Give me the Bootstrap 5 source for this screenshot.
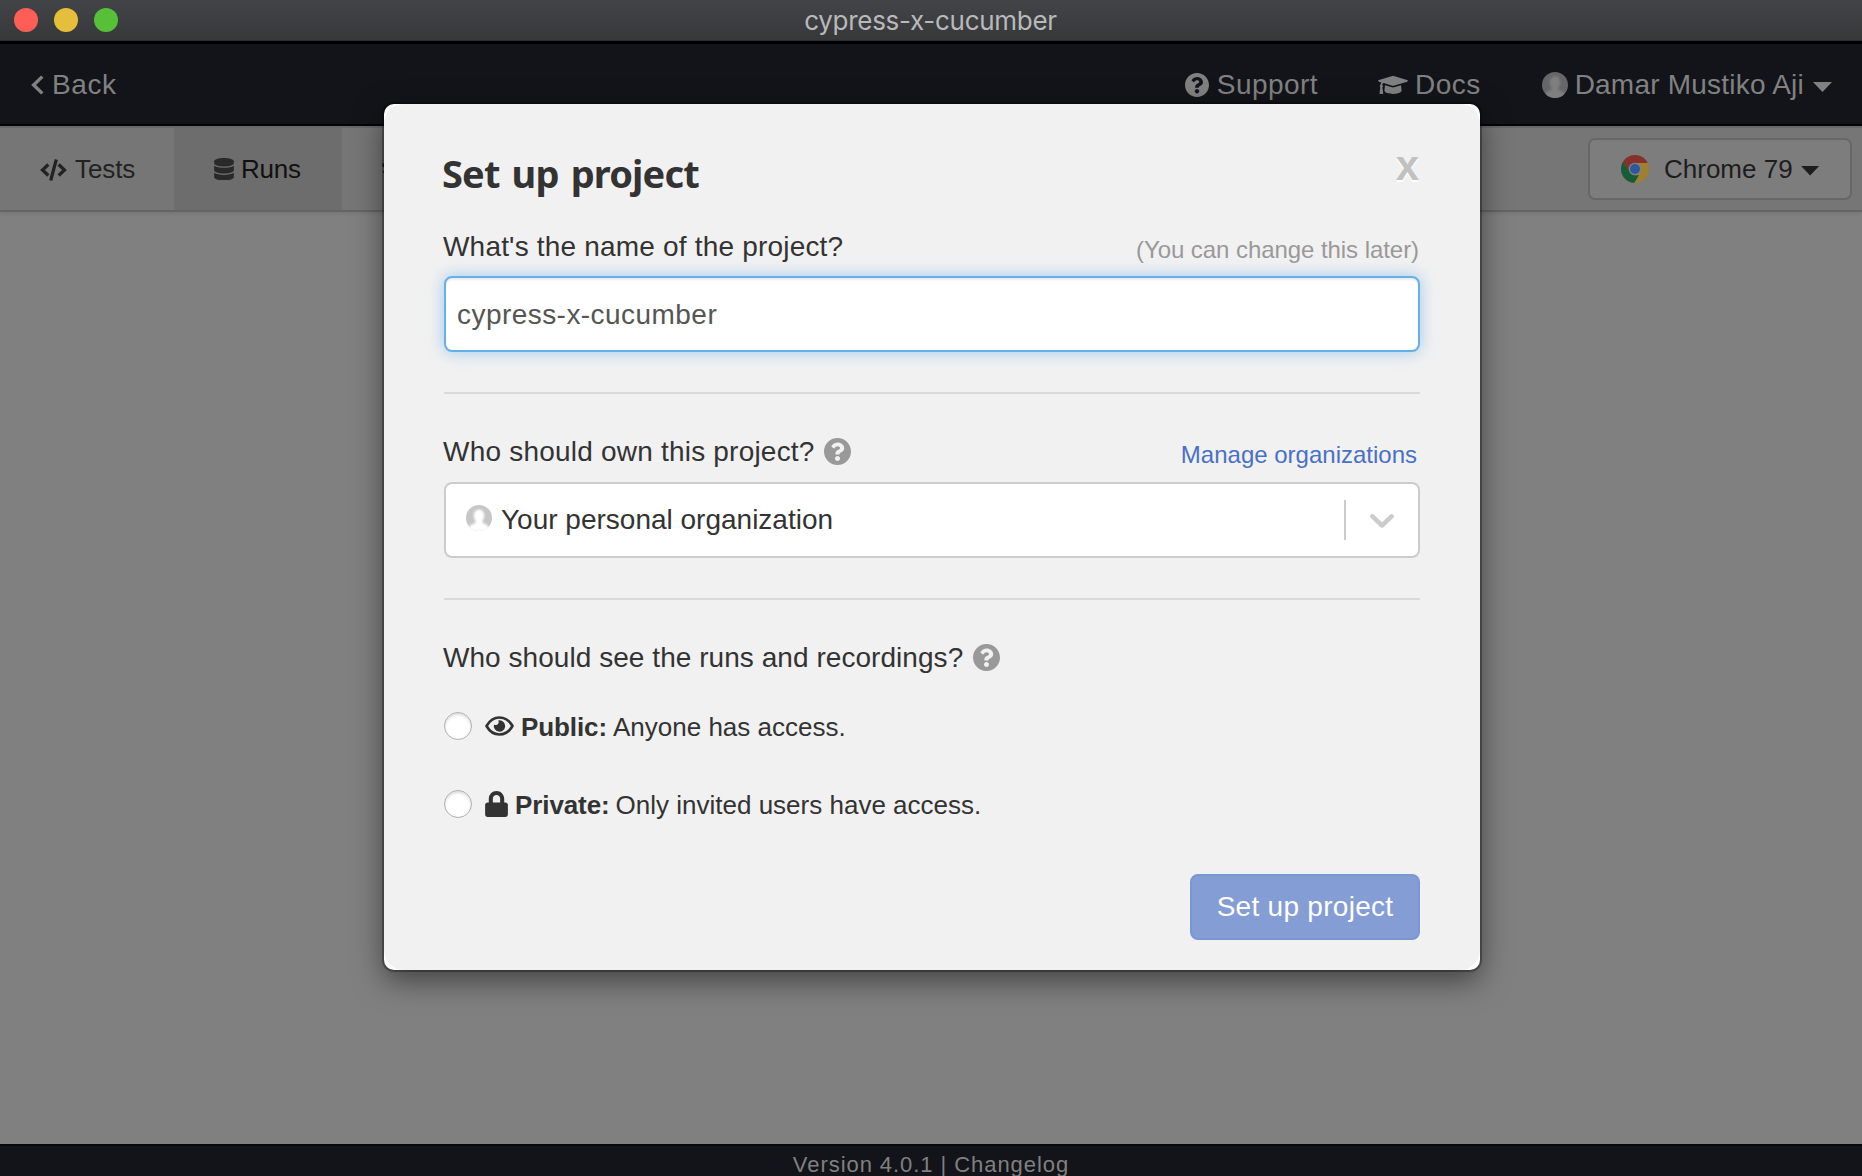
<!DOCTYPE html>
<html lang="en">
<head>
<meta charset="utf-8">
<meta name="viewport" content="width=device-width, initial-scale=1">
<title>cypress-x-cucumber</title>
<link rel="stylesheet" href="https://cdn.jsdelivr.net/npm/bootstrap@5.3.0/dist/css/bootstrap.min.css">
<style>
  html, body { height: 100%; }
  body { font-family: "Liberation Sans", Arial, sans-serif; font-size: 28px; line-height: 40px; background: #808080; color: #333; overflow: hidden; }
  svg { display: block; flex: none; }

  /* window title bar */
  .titlebar { height: 44px; padding: 0 14px 4px; background: linear-gradient(#434447, #37383a 40px, #2c2d2f 40px, #2c2d2f 41px, #000 41px); }
  .dot { width: 24px; height: 24px; border-radius: 50%; }
  .dot-r { background: #ff5e57; } .dot-y { background: #e5bf3c; } .dot-g { background: #57c038; }
  .win-title { font-family: Inter, sans-serif; font-size: 26px; letter-spacing: -.3px; color: #b8b9ba; padding-top: 2px; margin-right: 1px; }
  .title-side { width: 400px; gap: 16px; }

  /* app navigation */
  .topnav { height: 82px; padding: 0 30px 0 31px; background: #131419; border-bottom: 2px solid #050507; color: #818181; flex-wrap: nowrap; }
  .topnav .nav-link { display: flex; align-items: center; padding: 0; color: inherit; }
  .topnav .nav-link span { padding-top: 1px; }
  .nav-gap { margin-right: 60px; }
  .tabbar { height: 86px; background: #767676; border-top: 2px solid #686868; border-bottom: 2px solid #646464; box-shadow: 0 2px 4px rgba(0,0,0,.08); font-size: 26px; color: #222; }
  .tabbar .nav-link { display: flex; align-items: center; padding: 0; color: inherit; height: 82px; }
  .tab-tests { width: 174px; padding-left: 40px !important; }
  .tab-runs { width: 168px; padding-left: 40px !important; background: #6d6d6d; color: #111 !important; }
  .tab-settings { padding-left: 40px !important; }
  .browser-btn { width: 264px; height: 62px; margin-right: 10px; padding: 0 0 0 31px; border: 2px solid #676767; border-radius: 7px; background: #7d7d7d; color: #1d1d1d; font-size: 26px; }
  .caret-down { width: 19px; height: 10px; background: currentColor; clip-path: polygon(0 0, 100% 0, 50% 100%); margin-top: 3px; }

  .app-footer { height: 32px; background: #131419; border-top: 2px solid #08080a; color: #808080; font-size: 22px; line-height: 38px; letter-spacing: .94px; overflow: hidden; }
  .app-footer a { color: inherit; text-decoration: none; }

  /* dialog */
  .setup-modal { overflow: hidden; }
  .setup-modal .modal-dialog { width: 1096px; max-width: none; margin: 104px 0 0 384px; }
  .setup-modal .modal-content { border: 0; border-radius: 10px; background: #fff; box-shadow: 0 0 0 2px rgba(0,0,0,.3), 0 10px 30px rgba(0,0,0,.5); }
  .setup-modal .modal-body { height: 866px; padding: 49px 60px 30px; border-radius: 20px; background: #f1f1f1; }
  .setup-title { margin: 0 0 0 -2px; font-family: "Noto Sans", sans-serif; font-size: 38px; font-weight: 700; line-height: 40px; letter-spacing: -.85px; word-spacing: 3px; color: #333; }
  .close-x { padding: 0; border: 0; background: none; color: #c1c1c1; font-size: 42px; font-weight: 700; line-height: 40px; margin: -7px 1px 0 0; text-shadow: 0 2px 0 #fff; }
  .field-head { height: 40px; margin-bottom: 10px; }
  .field-text { margin-left: -1px; }
  .side-note { font-size: 24px; padding: 4px 1px 0 0; color: #999; text-decoration: none; }
  .side-link { color: #4970c6; padding: 3px 3px 0 0; }
  .name-input { height: 76px; padding: 1px 11px 0; border: 2px solid #66afe9; border-radius: 8px; font-size: 28px; letter-spacing: .45px; color: #555; box-shadow: inset 0 2px 2px rgba(0,0,0,.075), 0 0 16px rgba(102,175,233,.6) !important; }
  .owner-select { height: 76px; border: 2px solid #ccc; border-radius: 8px; background: #fff; padding-left: 20px; }
  .bar-sep { width: 2px; height: 40px; background: #ccc; }
  .rule { margin: 40px 0 38px; border: 0; height: 2px; background: #d9d9d9; opacity: 1; }
  .choice { height: 40px; font-size: 26px; }
  .choice input { appearance: none; width: 28px; height: 28px; margin: 0 13px 0 0; border: 1px solid #b0b0b0; border-radius: 50%; background: #fff; box-shadow: inset 0 2px 3px rgba(0,0,0,.14); flex: none; }
  .choice b { margin: 0 6px 0 7px; letter-spacing: -.1px; }
  .choice span, .choice b { padding-top: 1px; }
  .btn-setup { width: 230px; height: 66px; padding: 0; border: 2px solid #7a97d3; border-radius: 8px; background: #859dd5; color: #fff; font-size: 28px; letter-spacing: .28px; }
  .btn-setup:disabled { opacity: 1; color: #fff; background: #859dd5; border-color: #7a97d3; }
</style>
<script src="https://cdn.jsdelivr.net/npm/bootstrap@5.3.0/dist/js/bootstrap.bundle.min.js"></script>
</head>
<body class="d-flex flex-column">

<svg width="0" height="0" class="position-absolute">
  <defs>
    <symbol id="i-help" viewBox="8 8 496 496"><path d="M504 256c0 136.997-111.043 248-248 248S8 392.997 8 256C8 119.083 119.043 8 256 8s248 111.083 248 248zM262.655 90c-54.497 0-89.255 22.957-116.549 63.758-3.536 5.286-2.353 12.415 2.715 16.258l34.699 26.31c5.205 3.947 12.621 3.008 16.665-2.122 17.864-22.658 30.113-35.797 57.303-35.797 20.429 0 45.698 13.148 45.698 32.958 0 14.976-12.363 22.667-32.534 33.976C247.128 238.528 216 254.941 216 296v4c0 6.627 5.373 12 12 12h56c6.627 0 12-5.373 12-12v-1.333c0-28.462 83.186-29.647 83.186-106.667 0-58.002-60.165-102-116.531-102zM256 338c-25.365 0-46 20.635-46 46 0 25.364 20.635 46 46 46s46-20.636 46-46c0-25.365-20.635-46-46-46z"/></symbol>
    <filter id="soft"><feGaussianBlur stdDeviation=".8"/></filter>
  </defs>
</svg>

<header class="titlebar d-flex align-items-center justify-content-between">
  <div class="title-side d-flex"><span class="dot dot-r"></span><span class="dot dot-y"></span><span class="dot dot-g"></span></div>
  <div class="win-title">cypress-x-cucumber</div>
  <div class="title-side"></div>
</header>

<nav class="topnav navbar">
  <a class="nav-link" href="#">
    <svg width="13" height="20" viewBox="0 0 13 20" style="margin-top:2px"><path d="M11.3 1.600 2.600 10l8.700 8.400" fill="none" stroke="currentColor" stroke-width="3.400"/></svg>
    <span style="letter-spacing:.58px" class="ms-2">Back</span>
  </a>
  <div class="d-flex align-items-center">
    <a class="nav-link nav-gap" href="#">
      <svg width="24" height="24" fill="currentColor" style="margin-top:2px"><use href="#i-help"/></svg>
      <span class="ms-2" style="letter-spacing:.45px">Support</span>
    </a>
    <a class="nav-link" href="#" style="margin-right:61px">
      <svg width="30" height="18" viewBox="0 0 30 18" fill="currentColor" style="margin-top:2px"><path d="M15 0c.5 0 1 .1 1.500.2l12.600 3.700c1 .3 1 1.500 0 1.800l-12.600 3.700c-1 .3-2 .3-3 0L5.700 7.100c-.9.400-1.300 1-1.400 2 .9.600.9 1.700.1 2.300l.8 5.600c.1.500-.2.900-.7.900H2.200c-.5 0-.8-.4-.7-.9l.8-5.600c-.8-.6-.7-1.800.1-2.300.1-1.100.4-1.900 1-2.600L.9 5.700C-.1 5.400-.1 4.200.9 3.900L13.500.2C14 .1 14.500 0 15 0z"/><path d="M7 9.300l6 1.800c1.400.4 2.700.4 4 0l6-1.800.6 5.300c0 1.900-3.900 3.400-8.600 3.400s-8.600-1.500-8.600-3.400z"/></svg>
      <span style="letter-spacing:.45px;margin-left:7px">Docs</span>
    </a>
    <a class="nav-link" href="#">
      <svg width="26" height="26" viewBox="0 0 26 26" style="margin-top:2px"><clipPath id="ca"><circle cx="13" cy="13" r="13"/></clipPath><g clip-path="url(#ca)"><path fill="#666" d="M0 0h26v26H0z"/><g fill="#7f7f7f" filter="url(#soft)"><ellipse cx="13" cy="10.500" rx="5.300" ry="6.300"/><path d="M9.500 15h7v3c4 1 7 3 8 9h-23c1-6 4-8 8-9z"/></g></g></svg>
      <span style="letter-spacing:.22px;margin-left:7px;margin-right:9px">Damar Mustiko Aji</span><span class="caret-down" style="margin-top:6px"></span>
    </a>
  </div>
</nav>

<div class="tabbar d-flex align-items-center">
  <a class="nav-link tab-tests" href="#">
    <svg width="27" height="22" viewBox="0 0 27 22" fill="none" stroke="currentColor" stroke-width="3.200" style="margin-top:1px"><path d="M8.300 5.500 2.500 11l5.800 5.500M18.700 5.500l5.800 5.500-5.800 5.500"/><path d="M16.300.5 10.700 21.500"/></svg>
    <span style="letter-spacing:-.1px;margin-left:8px">Tests</span>
  </a>
  <a class="nav-link tab-runs" href="#">
    <svg width="20" height="22.500" viewBox="0 0 448 512" fill="#292929"><path d="M448 73.143v45.714C448 159.143 347.667 192 224 192S0 159.143 0 118.857V73.143C0 32.857 100.333 0 224 0s224 32.857 224 73.143zM448 176v102.857C448 319.143 347.667 352 224 352S0 319.143 0 278.857V176c48.125 33.143 136.208 48.572 224 48.572S399.874 209.143 448 176zm0 160v102.857C448 479.143 347.667 512 224 512S0 479.143 0 438.857V336c48.125 33.143 136.208 48.572 224 48.572S399.874 369.143 448 336z"/></svg>
    <span style="letter-spacing:-.2px;margin-left:7px">Runs</span>
  </a>
  <a class="nav-link tab-settings me-auto" href="#">
    <svg width="24" height="24" viewBox="0 0 24 24" fill="currentColor"><path fill-rule="evenodd" d="M10 0h4v4h-4zM10 20h4v4h-4zM.4 5.500 2.400 7 5 8v8l-2.600 1-1.800-2.500L2.500 13v-2L.4 9.300zM23.500 5.500v3.800L21.500 11v2l2 1.500-2 2.500L19 16V8zM12 3a9 9 0 1 1 0 18 9 9 0 0 1 0-18zm0 5a4 4 0 1 0 0 8 4 4 0 0 0 0-8z"/></svg>
  </a>
  <button type="button" class="browser-btn d-flex align-items-center">
    <svg width="28" height="28" viewBox="0 0 28 28"><clipPath id="cc"><circle cx="14" cy="14" r="14"/></clipPath><g clip-path="url(#cc)"><path fill="#85322c" d="M0 0h28v8H14L8.500 17 0 4z"/><path fill="#a07f2d" d="M14 8h14v20H12.500L19.400 17z"/><path fill="#175c37" d="M1.800 6.500 8.800 17l5.200 3.200h4L13.200 28H0V6.500z"/></g><circle cx="14" cy="14" r="6.300" fill="#7f8387"/><circle cx="14" cy="14" r="5" fill="#2f579c"/></svg>
    <span style="margin-left:15px;margin-right:8px">Chrome 79</span><span class="caret-down"></span>
  </button>
</div>

<main class="flex-grow-1"></main>

<footer class="app-footer text-center">Version 4.0.1 | <a href="#">Changelog</a></footer>

<div class="modal d-block setup-modal" tabindex="-1" role="dialog" aria-labelledby="setup-heading">
  <div class="modal-dialog">
    <div class="modal-content">
      <form class="modal-body d-flex flex-column">
        <div class="d-flex justify-content-between align-items-start" style="margin-bottom:33px">
          <h4 class="setup-title" id="setup-heading">Set up project</h4>
          <button type="button" class="close-x" aria-label="Close">x</button>
        </div>

        <div class="field-head d-flex justify-content-between">
          <label for="project-name" class="field-text" style="letter-spacing:.19px;padding-top:1px">What's the name of the project?</label>
          <span class="side-note" style="letter-spacing:-.06px">(You can change this later)</span>
        </div>
        <input type="text" id="project-name" class="form-control name-input" value="cypress-x-cucumber">

        <hr class="rule">

        <div class="field-head d-flex justify-content-between">
          <div class="d-flex">
            <span class="field-text" style="letter-spacing:.21px">Who should own this project?</span>
            <svg width="27" height="27" fill="#999" style="margin:6px 0 0 9px"><use href="#i-help"/></svg>
          </div>
          <a href="#" class="side-note side-link">Manage organizations</a>
        </div>
        <div class="owner-select d-flex align-items-center">
          <svg width="26" height="26" viewBox="0 0 26 26" style="margin-top:-4px"><clipPath id="cb"><circle cx="13" cy="13" r="13"/></clipPath><g clip-path="url(#cb)"><path fill="#c6c6c6" d="M0 0h26v26H0z"/><g fill="#fff" filter="url(#soft)"><ellipse cx="13" cy="10.800" rx="5.300" ry="6.300"/><path d="M9.500 15h7v3c4 1 7 3 8 9h-23c1-6 4-8 8-9z"/></g></g></svg>
          <span class="me-auto" style="margin-left:9px">Your personal organization</span>
          <span class="bar-sep"></span>
          <svg width="24" height="14" viewBox="0 0 24 14" style="margin:2px 24px 0"><path d="M2.400 2.400 12 11.500l9.600-9.100" fill="none" stroke="#ccc" stroke-width="4.500" stroke-linecap="round" stroke-linejoin="round"/></svg>
        </div>

        <hr class="rule">

        <div class="d-flex" style="margin-bottom:28px">
          <span class="field-text" style="letter-spacing:.05px">Who should see the runs and recordings?</span>
          <svg width="27" height="27" fill="#999" style="margin:6px 0 0 10px"><use href="#i-help"/></svg>
        </div>

        <label class="choice d-flex align-items-center" style="margin-bottom:38px">
          <input type="radio" name="privacy">
          <svg width="29" height="20" viewBox="0 0 29 20"><path d="M1.500 10C4.500 4.700 9 1.500 14.500 1.500S24.500 4.700 27.500 10c-3 5.300-7.500 8.500-13 8.500S4.500 15.300 1.500 10z" fill="none" stroke="#333" stroke-width="2.600" stroke-linejoin="round"/><path d="M14.500 4.300a5.700 5.700 0 1 1-5.500 4.200c.8.500 1.700.6 2.500.4 1.900-.5 2.800-2.500 1.800-4.500.4-.1.800-.1 1.200-.1z" fill="#333"/></svg>
          <b>Public:</b><span>Anyone has access.</span>
        </label>

        <label class="choice d-flex align-items-center">
          <input type="radio" name="privacy">
          <svg width="23" height="26" viewBox="0 0 448 512" fill="#333"><path d="M400 224h-24v-72C376 68.200 307.800 0 224 0S72 68.200 72 152v72H48c-26.500 0-48 21.500-48 48v192c0 26.500 21.500 48 48 48h352c26.500 0 48-21.500 48-48V272c0-26.500-21.500-48-48-48zm-104 0H152v-72c0-39.700 32.300-72 72-72s72 32.300 72 72v72z"/></svg>
          <b>Private:</b><span>Only invited users have access.</span>
        </label>

        <button type="submit" class="btn btn-setup mt-auto align-self-end" disabled>Set up project</button>
      </form>
    </div>
  </div>
</div>
</body>
</html>
